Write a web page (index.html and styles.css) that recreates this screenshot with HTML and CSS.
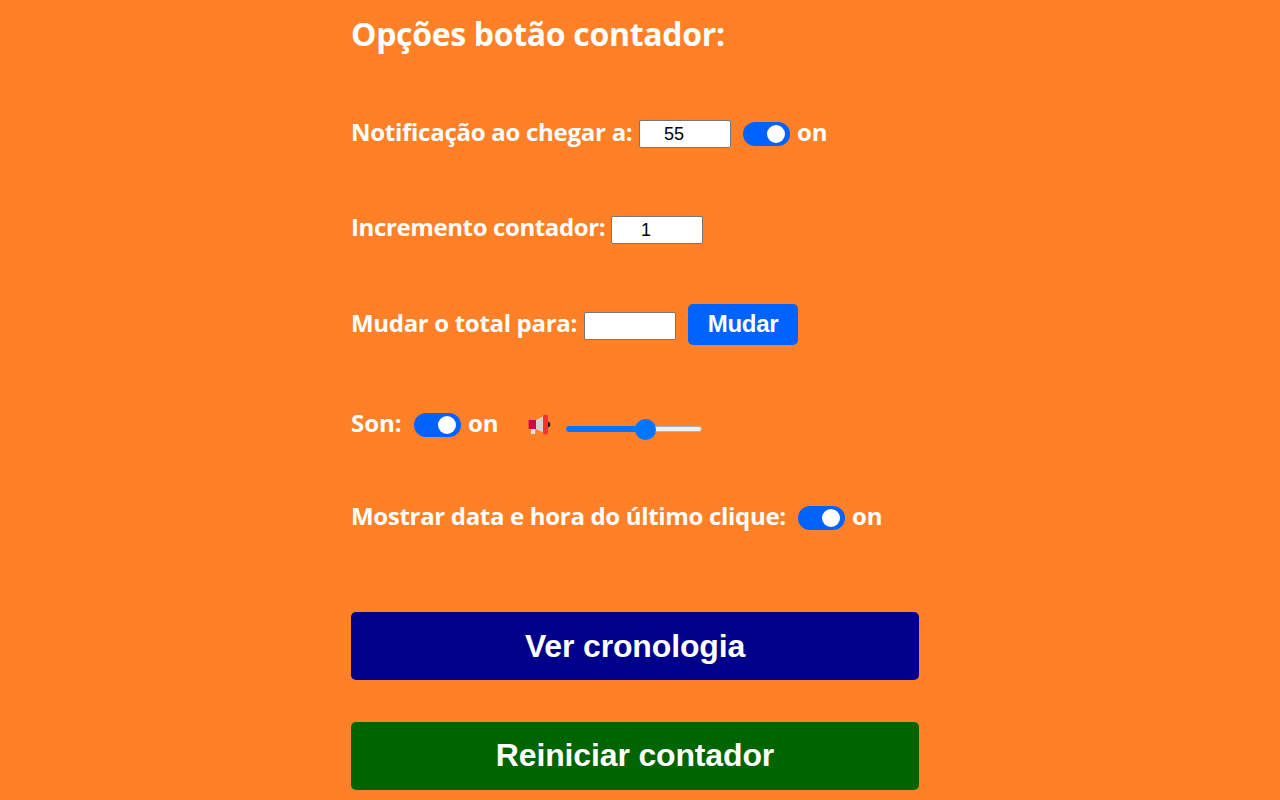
FILE: index.html
```html
<!DOCTYPE html>
<html lang="pt">
<head>
<meta charset="utf-8">
<title>Opções</title>
<link rel="stylesheet" href="styles.css">
</head>
<body>
<main class="options">
  <h1 class="title">Opções botão contador:</h1>
  <div class="row row-notify">
    <span class="label">Notificação ao chegar a:</span>
    <input class="number" type="text" value="55">
    <span class="switch"><span class="knob"></span></span>
    <span class="state">on</span>
  </div>
  <div class="row row-step">
    <span class="label">Incremento contador:</span>
    <input class="number" type="text" value="1">
  </div>
  <div class="row row-total">
    <span class="label">Mudar o total para:</span>
    <input class="number" type="text" value="">
    <button class="change">Mudar</button>
  </div>
  <div class="row row-sound">
    <span class="label">Son:</span>
    <span class="switch"><span class="knob"></span></span>
    <span class="state">on</span>
    <svg class="horn" width="24" height="22" viewBox="0 0 24 22">
      <ellipse cx="20" cy="9.5" rx="2.3" ry="2.7" fill="#212121"/>
      <path d="M3 14h4.2v5H3z" fill="#e1e1e1"/>
      <path d="M1 5h8v9H1.6L.6 13.4V5.4z" fill="#ca0b4a"/>
      <path d="M8 5l8-4v17l-8-4z" fill="#d3d3d3"/>
      <rect x="15" y="-.2" width="5" height="19.6" rx="1.8" fill="#f8312f"/>
    </svg>
    <span class="slider"><span class="fill"></span><span class="thumb"></span></span>
  </div>
  <div class="row row-date">
    <span class="label">Mostrar data e hora do último clique:</span>
    <span class="switch"><span class="knob"></span></span>
    <span class="state">on</span>
  </div>
  <button class="wide history">Ver cronologia</button>
  <button class="wide reset">Reiniciar contador</button>
</main>
</body>
</html>
```
FILE: styles.css
```css
body { margin: 0; height: 800px; overflow: hidden; background: #ff8027; color: #fff; font-family: "Open Sans", sans-serif; }
.options { width: 568px; margin-left: 351px; display: flex; flex-direction: column; }
.title { margin: 11px 0 0; height: 46px; line-height: 46px; font-size: 32px; font-weight: 700; letter-spacing: -0.32px; white-space: nowrap; }
.row { display: flex; align-items: center; height: 40px; font-size: 24px; font-weight: 700; white-space: nowrap; }
.row-notify { margin-top: 57px; }
.row-step { margin-top: 56px; }
.row-total { margin-top: 54px; }
.row-sound { margin-top: 61px; }
.row-date { margin-top: 53px; }
.label, .state { line-height: 36px; padding-bottom: 4px; flex: none; }
.row-notify .label { width: 288px; letter-spacing: -0.27px; }
.row-step .label { width: 260px; padding-bottom: 6px; letter-spacing: -0.38px; }
.row-total .label { width: 233px; padding-bottom: 2px; letter-spacing: -0.32px; }
.row-sound .label { width: 51px; }
.row-date .label { width: 435px; letter-spacing: -0.32px; }
.number { box-sizing: border-box; width: 92px; height: 28px; margin: 0; padding: 0 22px 0 0; border: 1px solid #767676; border-radius: 2px; background: #fff; color: #000; font: 18px "Liberation Sans", Arial, sans-serif; text-align: center; }
.row-total .number { margin-top: 4px; }
.switch { box-sizing: border-box; flex: none; display: flex; align-items: center; justify-content: flex-end; width: 47px; height: 24px; margin-left: 12px; padding-right: 5px; border-radius: 12px; background: #0062ff; }
.row-notify .switch { margin-top: -1px; }
.row-date .switch { margin-left: 12px; }
.row-date .label { width: 435px; }
.knob { width: 18px; height: 18px; border-radius: 50%; background: #fff; }
.state { margin-left: 7px; }
.row-sound .state { width: 30px; }
.change { box-sizing: border-box; width: 110px; height: 41px; margin-left: 12px; padding: 0; border: 0; border-radius: 5px; background: #0062ff; color: #fff; font: bold 24px "Liberation Sans", Arial, sans-serif; letter-spacing: -0.3px; }
.horn { margin: 2px 0 0 30px; flex: none; overflow: visible; }
.slider { position: relative; box-sizing: border-box; width: 136px; height: 6px; margin: 7px 0 0 14px; border: 1px solid #b2b2b2; border-radius: 3px; background: #efefef; }
.fill { position: absolute; left: -1px; top: -1px; width: 80px; height: 6px; border-radius: 3px; background: #0075ff; }
.thumb { position: absolute; left: 68px; top: -8px; width: 21px; height: 21px; border-radius: 50%; background: #0075ff; }
.wide { height: 68px; padding: 0; border: 0; border-radius: 5px; color: #fff; font: bold 32px "Liberation Sans", Arial, sans-serif; letter-spacing: -0.15px; }
.history { margin-top: 74px; background: #00008b; }
.reset { margin-top: 42px; padding-bottom: 2px; background: #006400; }
```
